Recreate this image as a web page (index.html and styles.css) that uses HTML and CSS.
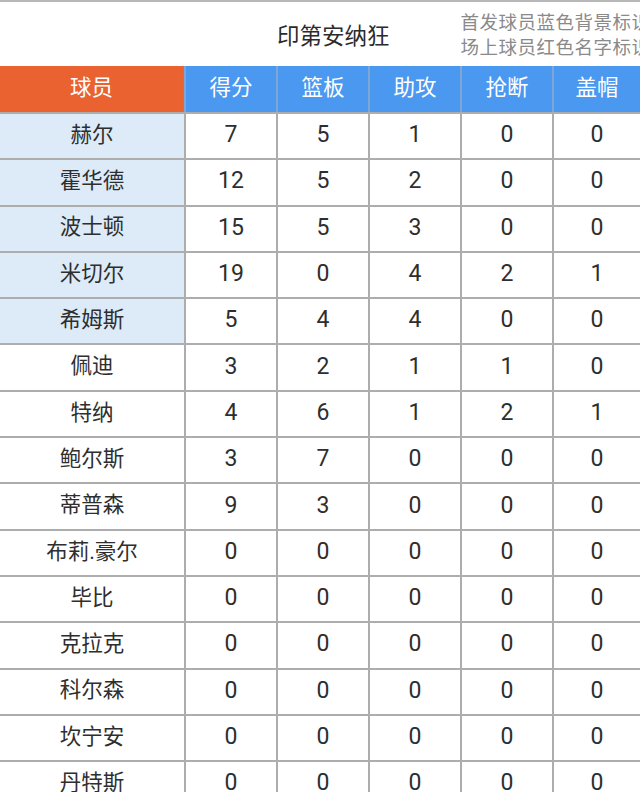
FILE: index.html
```html
<!DOCTYPE html>
<html lang="zh">
<head>
<meta charset="utf-8">
<link rel="stylesheet" href="styles.css">
</head>
<body>
<div class="page">
  <div class="titlebar">
    <div class="title">印第安纳狂</div>
    <div class="note">
      <div>首发球员蓝色背景标识</div>
      <div>场上球员红色名字标识</div>
    </div>
  </div>
  <div class="table">
    <div class="row head">
      <div class="cell name">球员</div>
      <div class="cell">得分</div>
      <div class="cell">篮板</div>
      <div class="cell">助攻</div>
      <div class="cell">抢断</div>
      <div class="cell">盖帽</div>
    </div>
    <div class="row"><div class="cell name starter">赫尔</div><div class="cell">7</div><div class="cell">5</div><div class="cell">1</div><div class="cell">0</div><div class="cell">0</div></div>
    <div class="row"><div class="cell name starter">霍华德</div><div class="cell">12</div><div class="cell">5</div><div class="cell">2</div><div class="cell">0</div><div class="cell">0</div></div>
    <div class="row"><div class="cell name starter">波士顿</div><div class="cell">15</div><div class="cell">5</div><div class="cell">3</div><div class="cell">0</div><div class="cell">0</div></div>
    <div class="row"><div class="cell name starter">米切尔</div><div class="cell">19</div><div class="cell">0</div><div class="cell">4</div><div class="cell">2</div><div class="cell">1</div></div>
    <div class="row"><div class="cell name starter">希姆斯</div><div class="cell">5</div><div class="cell">4</div><div class="cell">4</div><div class="cell">0</div><div class="cell">0</div></div>
    <div class="row"><div class="cell name">佩迪</div><div class="cell">3</div><div class="cell">2</div><div class="cell">1</div><div class="cell">1</div><div class="cell">0</div></div>
    <div class="row"><div class="cell name">特纳</div><div class="cell">4</div><div class="cell">6</div><div class="cell">1</div><div class="cell">2</div><div class="cell">1</div></div>
    <div class="row"><div class="cell name">鲍尔斯</div><div class="cell">3</div><div class="cell">7</div><div class="cell">0</div><div class="cell">0</div><div class="cell">0</div></div>
    <div class="row"><div class="cell name">蒂普森</div><div class="cell">9</div><div class="cell">3</div><div class="cell">0</div><div class="cell">0</div><div class="cell">0</div></div>
    <div class="row"><div class="cell name">布莉.豪尔</div><div class="cell">0</div><div class="cell">0</div><div class="cell">0</div><div class="cell">0</div><div class="cell">0</div></div>
    <div class="row"><div class="cell name">毕比</div><div class="cell">0</div><div class="cell">0</div><div class="cell">0</div><div class="cell">0</div><div class="cell">0</div></div>
    <div class="row"><div class="cell name">克拉克</div><div class="cell">0</div><div class="cell">0</div><div class="cell">0</div><div class="cell">0</div><div class="cell">0</div></div>
    <div class="row"><div class="cell name">科尔森</div><div class="cell">0</div><div class="cell">0</div><div class="cell">0</div><div class="cell">0</div><div class="cell">0</div></div>
    <div class="row"><div class="cell name">坎宁安</div><div class="cell">0</div><div class="cell">0</div><div class="cell">0</div><div class="cell">0</div><div class="cell">0</div></div>
    <div class="row"><div class="cell name">丹特斯</div><div class="cell">0</div><div class="cell">0</div><div class="cell">0</div><div class="cell">0</div><div class="cell">0</div></div>
  </div>
</div>
</body>
</html>
```

FILE: styles.css
```css
html, body {
  margin: 0;
  padding: 0;
  background: #ffffff;
}
body {
  font-family: "Noto Sans CJK SC", "Noto Sans", sans-serif;
  color: #2a2a2a;
  overflow: hidden;
  width: 640px;
  height: 792px;
}
.page {
  width: 640px;
}
.titlebar {
  height: 64px;
  border-top: 2px solid #b8b8b8;
  display: flex;
  align-items: center;
  white-space: nowrap;
}
.title {
  margin-left: 277px;
  font-size: 22.5px;
  color: #2b2b2b;
  line-height: 1;
  margin-top: 1px;
}
.note {
  margin-left: 71px;
  font-size: 18.5px;
  color: #8a8a8a;
  line-height: 25px;
  letter-spacing: 0.5px;
}
.table {
  display: flex;
  flex-direction: column;
}
.row {
  display: grid;
  grid-template-columns: 184px 92px 92px 92px 92px 88px;
  height: 46.3px;
  box-sizing: border-box;
  border-top: 2px solid #adadad;
}
.row.head {
  height: 46px;
  border-top: none;
  background: #4a98f0;
  color: #ffffff;
}
.cell {
  display: flex;
  align-items: center;
  justify-content: center;
  font-family: "Roboto", "Noto Sans CJK SC", sans-serif;
  font-weight: 400;
  font-size: 23px;
  color: #2e2e2e;
  border-left: 2px solid #adadad;
  line-height: 1;
  padding-bottom: 3px;
  box-sizing: border-box;
}
.cell.name {
  border-left: none;
  font-size: 21.5px;
}
.head .cell {
  border-left-color: #7fa7d6;
  color: #ffffff;
  font-size: 21.5px;
  padding-bottom: 2px;
}
.head .cell.name {
  background: #e9622f;
  border-right: 1px solid #b07a66;
}
.cell.starter {
  background: #ddebf9;
}
```
